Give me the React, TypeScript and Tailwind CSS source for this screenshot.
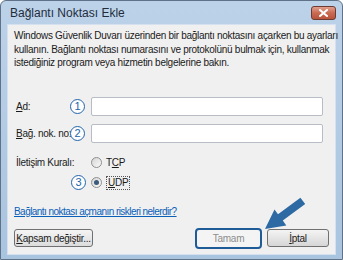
import React from "react";

const font = { fontFamily: '"Liberation Sans", Arial, sans-serif' };

function Circled({ n }: { n: string }) {
  return (
    <span className="flex h-[15px] w-[15px] shrink-0 items-center justify-center rounded-full border-[1.5px] border-[#2264ab] bg-white text-[11px] leading-none tracking-normal text-[#2264ab]">
      {n}
    </span>
  );
}

function Radio({ checked }: { checked?: boolean }) {
  return (
    <span className="flex h-[11px] w-[11px] shrink-0 items-center justify-center rounded-full border border-[#8e8f8f] bg-gradient-to-br from-[#d4d4d4] to-[#fbfbfb]">
      {checked && <span className="h-[5px] w-[5px] rounded-full bg-[#3d5a7c]" />}
    </span>
  );
}

export default function App() {
  return (
    <div
      className="relative flex h-[260px] w-[343px] flex-col overflow-hidden rounded-t-[6px] border border-[#5f7287] bg-gradient-to-b from-[#bcd2e9] to-[#a9c4df] text-[10px] leading-[13px] tracking-[-0.28px] text-[#1a1a1a]"
      style={font}
    >
      <div className="flex h-[23px] shrink-0 items-center justify-between pl-[9px] pr-[6px] pt-[1px]">
        <span className="text-[12px] tracking-normal text-[#1f2d3d]">Bağlantı Noktası Ekle</span>
        <span className="flex h-[14px] w-[25px] items-center justify-center rounded-[3px] border border-[#6d3b30] bg-gradient-to-b from-[#e0a08e] via-[#c96a52] to-[#b9533b]">
          <svg width="9" height="8" viewBox="0 0 9 8">
            <path d="M1 1 L8 7 M8 1 L1 7" stroke="#ffffff" strokeWidth="2" strokeLinecap="square" />
          </svg>
        </span>
      </div>
      <div className="mx-[6px] mb-[4px] flex flex-1 flex-col border border-[#d5e1ee] bg-[#f0f0f0] px-[6px] pt-[4px]">
        <p className="whitespace-nowrap leading-[13.5px]">
          Windows Güvenlik Duvarı üzerinden bir bağlantı noktasını açarken bu ayarları
          <br />
          kullanın. Bağlantı noktası numarasını ve protokolünü bulmak için, kullanmak
          <br />
          istediğiniz program veya hizmetin belgelerine bakın.
        </p>
        <div className="mt-[27px] flex h-[19px] items-center pl-[2px]">
          <span className="w-[54px] whitespace-nowrap">
            <span className="underline">A</span>d:
          </span>
          <Circled n="1" />
          <span className="ml-[6px] h-[19px] w-[232px] rounded-[2px] border border-[#b8bcc4] bg-white" />
        </div>
        <div className="mt-[8px] flex h-[19px] items-center pl-[2px]">
          <span className="w-[54px] whitespace-nowrap">
            <span className="underline">B</span>ağ. nok. no:
          </span>
          <Circled n="2" />
          <span className="ml-[6px] h-[19px] w-[232px] rounded-[2px] border border-[#b8bcc4] bg-white" />
        </div>
        <div className="mt-[13px] flex pl-[2px]">
          <span className="w-[75px] whitespace-nowrap">İletişim Kuralı:</span>
          <div className="flex flex-col gap-[6px]">
            <div className="flex h-[14px] items-center gap-[4px]">
              <Radio />
              <span>
                T<span className="underline">C</span>P
              </span>
            </div>
            <div className="relative flex h-[14px] items-center gap-[4px]">
              <span className="absolute left-[-20px] top-[-1px]">
                <Circled n="3" />
              </span>
              <Radio checked />
              <span className="border border-dotted border-[#555] px-[1px] leading-[12px]">
                <span className="underline">U</span>DP
              </span>
            </div>
          </div>
        </div>
        <div className="mt-[15px]">
          <span className="tracking-[-0.55px] text-[#0a5fb8] underline">Bağlantı noktası açmanın riskleri nelerdir?</span>
        </div>
        <div className="mt-[10px] flex items-center justify-between">
          <span className="flex h-[18px] w-[79px] items-center justify-center whitespace-nowrap rounded-[3px] border border-[#707070] bg-gradient-to-b from-[#f4f4f4] to-[#dcdcdc]">
            <span className="underline">K</span>apsam değiştir...
          </span>
          <div className="flex items-center gap-[5px]">
            <span className="flex h-[21px] w-[67px] items-center justify-center rounded-[4px] border-2 border-[#1f5c97] bg-[#f4f4f4] text-[#8d8d8d]">
              Tamam
            </span>
            <span className="flex h-[18px] w-[62px] items-center justify-center rounded-[3px] border border-[#707070] bg-gradient-to-b from-[#f4f4f4] to-[#d6d6d6]">
              <span className="underline">İ</span>ptal
            </span>
          </div>
        </div>
      </div>
      <svg className="pointer-events-none absolute left-0 top-0" width="343" height="260" viewBox="0 0 343 260">
        <polygon
          points="264,228 285.3,224.4 281.8,219.6 304.2,203.1 299.4,196.7 277,213.2 273.5,208.4"
          fill="#2d6aa3"
        />
      </svg>
    </div>
  );
}
